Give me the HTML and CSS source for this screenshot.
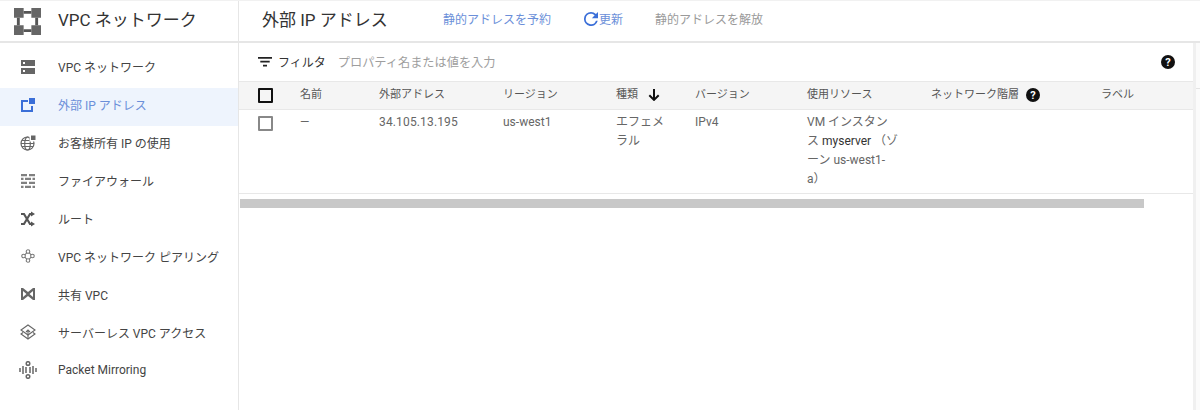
FILE: index.html
```html
<!DOCTYPE html>
<html lang="ja">
<head>
<meta charset="utf-8">
<title>外部 IP アドレス</title>
<link rel="stylesheet" href="styles.css">
</head>
<body>
<header class="topbar">
  <div class="brand">
    <svg class="brand-icon" viewBox="0 0 28 28"><path fill="#666" d="M0 0h10v10H0zM18 0h10v10H18zM0 18h10v10H0zM18 18h10v10H18z"/><path fill="#555" d="M10 3h8v3h-8zM10 22h8v3h-8zM3 10h3v8H3zM22 10h3v8h-3z"/></svg>
    <span class="brand-name">VPC ネットワーク</span>
  </div>
  <div class="actions">
    <h1 class="page-title">外部 IP アドレス</h1>
    <a class="action reserve">静的アドレスを予約</a>
    <a class="action refresh"><svg class="refresh-icon" viewBox="4 4 16 16"><path fill="#3b6fd8" d="M17.650 6.350A7.960 7.960 0 0 0 12 4a8 8 0 1 0 7.730 10h-2.080A6 6 0 1 1 12 6c1.660 0 3.140.690 4.220 1.780L13 11h7V4l-2.350 2.350z"/></svg>更新</a>
    <a class="action release">静的アドレスを解放</a>
  </div>
</header>
<div class="layout">
  <nav class="sidebar">
    <a class="nav-item"><svg class="nav-icon" viewBox="-1 -1 16 16"><path fill="#666" fill-rule="evenodd" d="M0 0h14v6H0zM0 8h14v6H0zM2 2v2h2V2zM2 10v2h2v-2z"/></svg>VPC ネットワーク</a>
    <a class="nav-item active"><svg class="nav-icon" viewBox="-1 -1 16 16"><path fill="#3b6fd8" d="M0 2h7v2H2v8h8V8h2v6H0zM8 0h6v6H8z"/></svg>外部 IP アドレス</a>
    <a class="nav-item"><svg class="nav-icon" viewBox="0 0 16 16"><g fill="none" stroke="#666" stroke-width="1.200"><circle cx="7.500" cy="8.500" r="6.500"/><ellipse cx="7.500" cy="8.500" rx="2.800" ry="6.500"/><path d="M1 8.500h13M2 5.500h11M2 11.500h11"/></g><path fill="#fff" d="M9.500 0H16v6.500H9.500z"/><path fill="#666" d="M11 .5h4.500V5H11z"/></svg>お客様所有 IP の使用</a>
    <a class="nav-item"><svg class="nav-icon" viewBox="-1 -1 16 16"><path fill="#808080" d="M0 0h6v2.200H0zM8 0h6v2.200H8zM0 3.800h2.500V6H0zM4 3.800h6V6H4zM11.500 3.800H14V6h-2.500zM0 7.800h6V10H0zM8 7.800h6V10H8zM0 11.800h2.500V14H0zM4 11.800h6V14H4zM11.500 11.800H14V14h-2.500z"/></svg>ファイアウォール</a>
    <a class="nav-item"><svg class="nav-icon" viewBox="-1 -2 16 16"><path fill="none" stroke="#555" stroke-width="2.200" d="M0 1l3 0 6 10h2M0 11h3l6-10h2"/><path fill="#555" d="M10-1.500L14 1l-4 2.500zM10 8.500l4 2.500-4 2.500z"/></svg>ルート</a>
    <a class="nav-item"><svg class="nav-icon" viewBox="-1 -1 18 18"><g fill="none" stroke="#777" stroke-width="1.200"><circle cx="8" cy="3" r="2"/><circle cx="3" cy="8" r="2"/><circle cx="13" cy="8" r="2"/><circle cx="8" cy="13" r="2"/><path d="M6.600 4.400L4.400 6.600M9.400 4.400l2.200 2.200M4.400 9.400l2.200 2.200M11.600 9.400l-2.200 2.200"/></g></svg>VPC ネットワーク ピアリング</a>
    <a class="nav-item"><svg class="nav-icon" viewBox="-1 -1 16 16"><path fill="#666" fill-rule="evenodd" d="M0 1h2l5 4 5-4h2v12h-2L7 9l-5 4H0zM2 4v6l3.500-3zM12 4L8.500 7l3.500 3z"/></svg>共有 VPC</a>
    <a class="nav-item"><svg class="nav-icon" viewBox="0 0 16 16"><g fill="none" stroke="#666" stroke-width="1.100"><path d="M8 1l7 5-7 5-7-5z"/><path d="M3 8.500L1 10l7 5 7-5-2-1.500"/><path d="M8 6v8M6 8l2-2 2 2"/></g></svg>サーバーレス VPC アクセス</a>
    <a class="nav-item"><svg class="nav-icon wide" viewBox="0 0 18 18"><g fill="none" stroke="#666" stroke-width="1.500"><path d="M1 7v4M4 5v8M14 5v8M17 7v4M7 6v6M11 6v6"/><circle cx="9" cy="2.500" r="1.800"/><circle cx="9" cy="15.500" r="1.800"/></g></svg>Packet Mirroring</a>
  </nav>
  <main class="content">
    <div class="panel">
      <div class="filter">
        <svg class="filter-icon" viewBox="0 0 14 10"><path fill="#222" d="M0 0h14v1.800H0zM2.300 3.800h9.400v1.800H2.300zM5 7.800h4v1.800H5z"/></svg>
        <span class="filter-label">フィルタ</span>
        <span class="filter-hint">プロパティ名または値を入力</span>
        <svg class="help help-top" viewBox="0 0 14 14"><circle cx="7" cy="7" r="7" fill="#111"/><text class="help-mark" x="7" y="10.500" text-anchor="middle">?</text></svg>
      </div>
      <table class="grid">
        <colgroup><col class="c-check"><col class="c-name"><col class="c-addr"><col class="c-region"><col class="c-type"><col class="c-ver"><col class="c-res"><col class="c-tier"><col class="c-label"></colgroup>
        <thead>
          <tr>
            <th class="check-cell"><span class="checkbox head"></span></th>
            <th>名前</th><th>外部アドレス</th><th>リージョン</th>
            <th><span class="sort-head">種類<svg class="sort-icon" viewBox="0 0 12 12"><path fill="#111" d="M5 0h2v8.500l3-3L11.400 6.900 6 12.300 .6 6.900 2 5.500l3 3z"/></svg></span></th>
            <th>バージョン</th><th>使用リソース</th>
            <th><span class="tier-head">ネットワーク階層<svg class="help" viewBox="0 0 14 14"><circle cx="7" cy="7" r="7" fill="#111"/><text class="help-mark" x="7" y="10.500" text-anchor="middle">?</text></svg></span></th>
            <th>ラベル</th>
          </tr>
        </thead>
        <tbody>
          <tr>
            <td class="check-cell"><span class="checkbox"></span></td>
            <td>—</td><td class="addr">34.105.13.195</td><td>us-west1</td>
            <td>エフェメ<br>ラル</td><td>IPv4</td>
            <td>VM インスタン<br>ス <span class="res-link">myserver</span> （ゾ<br>ーン us-west1-<br>a）</td>
            <td></td><td></td>
          </tr>
        </tbody>
      </table>
      <div class="scrollbar"></div>
    </div>
    <div class="rail"><div class="rail-line"></div></div>
  </main>
</div>
</body>
</html>
```
FILE: styles.css
```css
* { box-sizing: border-box; }
html, body { margin: 0; height: 410px; overflow: hidden; background: #fff; }
body { font-family: Roboto, "Noto Sans CJK JP", sans-serif; font-size: 12px; color: #5f6368; }
.topbar { display: flex; height: 43px; border-top: 1px solid #f1f1f1; border-bottom: 2px solid #e6e6e6; }
.brand { display: flex; align-items: center; width: 239px; padding-left: 14px; border-right: 1px solid #e6e6e6; }
.brand-icon { width: 27px; height: 27px; margin-right: 17px; }
.brand-name { font-size: 17px; color: #333; padding-bottom: 5px; }
.actions { display: flex; align-items: center; flex: 1; padding: 0 0 5px 23px; }
.page-title { margin: 0 57px 0 0; font-size: 17px; font-weight: 400; color: #333; white-space: nowrap; width: 124px; }
.action { white-space: nowrap; color: #6b8fd9; }
.reserve { margin-right: 33px; }
.refresh { display: flex; align-items: center; margin-right: 32px; }
.refresh-icon { width: 14px; height: 14px; margin-right: 1px; }
.release { color: #9a9a9a; }
.layout { display: flex; height: 367px; }
.sidebar { width: 239px; flex: none; border-right: 1px solid #e6e6e6; padding-top: 7px; display: flex; flex-direction: column; }
.nav-item { display: flex; align-items: center; height: 37.900px; padding: 0 0 4px 20px; color: #444; white-space: nowrap; }
.nav-item.active { background: #eef4fd; color: #6b8fd9; }
.nav-icon { width: 16px; height: 16px; margin-right: 22px; flex: none; }
.nav-icon.wide { width: 18px; height: 18px; margin: 0 21px 0 -1px; }
.content { flex: 1; display: flex; }
.panel { width: 957px; flex: none; border-right: 3px solid #f0f0f0; height: 100%; }
.rail { flex: 1; background: #fbfbfb; padding-top: 45px; }
.rail-line { height: 1px; background: #e4e4e4; }
.filter { display: flex; align-items: center; height: 38px; padding: 0 0 1px 19px; }
.filter-icon { width: 14px; height: 10px; margin-right: 6px; }
.filter-label { color: #333; margin-right: 12px; }
.filter-hint { color: #9e9e9e; font-size: 12.200px; }
.help { width: 14px; height: 14px; flex: none; }
.help-top { margin-left: auto; margin-right: 18px; }
.help-mark { fill: #fff; font-size: 11px; font-weight: 700; font-family: Roboto, sans-serif; }
.grid { border-collapse: collapse; table-layout: fixed; width: 954px; }
.c-check { width: 61px; } .c-name { width: 79px; } .c-addr { width: 124px; } .c-region { width: 113px; }
.c-type { width: 79px; } .c-ver { width: 112px; } .c-res { width: 124px; } .c-tier { width: 170px; } .c-label { width: 92px; }
.grid th { height: 28px; background: #f5f5f5; border-top: 1px solid #e8e8e8; border-bottom: 1px solid #e8e8e8; font-weight: 400; font-size: 11px; line-height: 16px; text-align: left; color: #555; padding: 0 0 2px; white-space: nowrap; }
.grid td { vertical-align: top; padding: 3px 24px 3px 0; line-height: 19px; color: #666; height: 84px; border-bottom: 1px solid #e8e8e8; }
.grid td:last-child, .grid td:nth-child(8) { padding-right: 0; }
.grid th.check-cell { padding: 0 0 0 19px; }
.grid td.check-cell { padding: 6px 0 0 19px; }
.checkbox { display: block; width: 15px; height: 15px; border: 2px solid #888; border-radius: 1px; }
.checkbox.head { border-color: #111; }
.addr { letter-spacing: .15px; }
.sort-head { display: flex; align-items: center; }
.sort-icon { width: 12px; height: 12px; margin-left: 10px; }
.tier-head { display: flex; align-items: center; gap: 7px; }
.res-link { color: #333; }
.scrollbar { width: 904px; height: 9px; margin: 5px 0 0 1px; background: #c8c8c8; }
```
